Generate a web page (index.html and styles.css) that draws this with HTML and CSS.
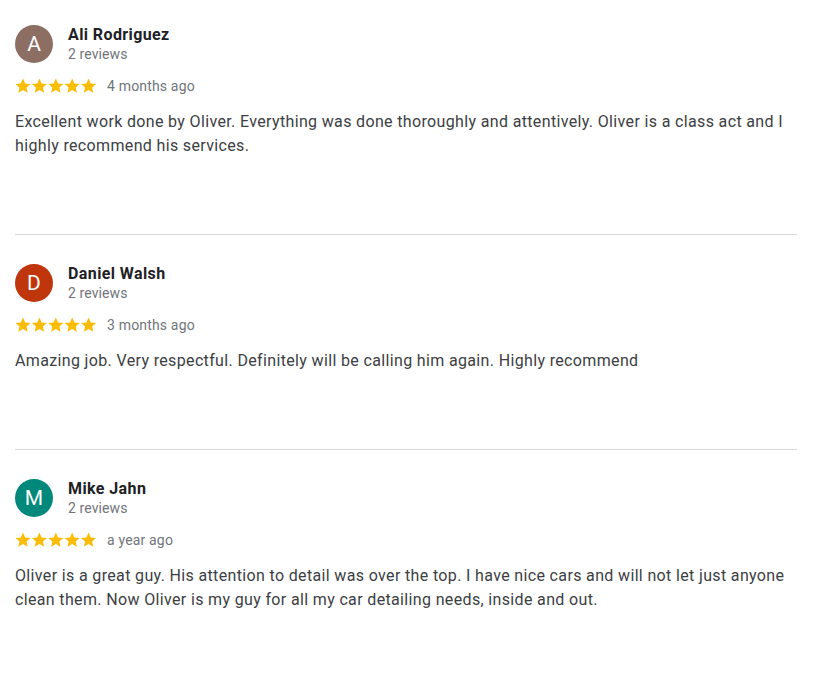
FILE: index.html
```html
<!DOCTYPE html>
<html>
<head>
<meta charset="utf-8">
<link rel="stylesheet" href="styles.css">
</head>
<body>
<div class="reviews">
  <div class="review">
    <div class="header">
      <div class="avatar avatar-brown">A</div>
      <div class="author">
        <div class="name">Ali Rodriguez</div>
        <div class="count">2 reviews</div>
      </div>
    </div>
    <div class="meta">
      <svg class="stars" width="82" height="16" viewBox="0 0 82 16"><defs><path id="s" d="M8 0.6l2.2 4.9 5.3 0.5-4 3.6 1.2 5.2L8 12.1l-4.7 2.7 1.2-5.2-4-3.6 5.3-0.5z"/></defs><use href="#s" x="0"/><use href="#s" x="16.4"/><use href="#s" x="32.8"/><use href="#s" x="49.2"/><use href="#s" x="65.6"/></svg>
      <span class="time">4 months ago</span>
    </div>
    <p class="text">Excellent work done by Oliver. Everything was done thoroughly and attentively. Oliver is a class act and I highly recommend his services.</p>
  </div>
  <div class="review">
    <div class="header">
      <div class="avatar avatar-red">D</div>
      <div class="author">
        <div class="name">Daniel Walsh</div>
        <div class="count">2 reviews</div>
      </div>
    </div>
    <div class="meta">
      <svg class="stars" width="82" height="16" viewBox="0 0 82 16"><use href="#s" x="0"/><use href="#s" x="16.4"/><use href="#s" x="32.8"/><use href="#s" x="49.2"/><use href="#s" x="65.6"/></svg>
      <span class="time">3 months ago</span>
    </div>
    <p class="text">Amazing job. Very respectful. Definitely will be calling him again. Highly recommend</p>
  </div>
  <div class="review">
    <div class="header">
      <div class="avatar avatar-teal">M</div>
      <div class="author">
        <div class="name">Mike Jahn</div>
        <div class="count">2 reviews</div>
      </div>
    </div>
    <div class="meta">
      <svg class="stars" width="82" height="16" viewBox="0 0 82 16"><use href="#s" x="0"/><use href="#s" x="16.4"/><use href="#s" x="32.8"/><use href="#s" x="49.2"/><use href="#s" x="65.6"/></svg>
      <span class="time">a year ago</span>
    </div>
    <p class="text">Oliver is a great guy. His attention to detail was over the top. I have nice cars and will not let just anyone clean them. Now Oliver is my guy for all my car detailing needs, inside and out.</p>
  </div>
</div>
</body>
</html>
```
FILE: styles.css
```css
html, body {
  margin: 0;
  padding: 0;
  background: #fff;
}
body {
  font-family: Roboto, "Liberation Sans", Arial, sans-serif;
}
.reviews {
  width: 782px;
  margin-left: 15px;
  padding-top: 25px;
}
.review {
  padding-bottom: 76px;
}
.review + .review {
  border-top: 1px solid #dadada;
  padding-top: 29px;
}
.header {
  display: flex;
  align-items: flex-start;
}
.avatar {
  width: 38px;
  height: 38px;
  border-radius: 50%;
  color: #fff;
  font-size: 21px;
  line-height: 38px;
  text-align: center;
  flex: none;
}
.avatar-brown { background: #8d6e63; }
.avatar-red { background: #bf360c; }
.avatar-teal { background: #00897b; }
.author {
  margin-left: 15px;
}
.name {
  font-size: 16px;
  font-weight: bold;
  line-height: 20px;
  letter-spacing: 0.4px;
  color: #202124;
}
.count {
  font-size: 14px;
  line-height: 18px;
  letter-spacing: 0.1px;
  color: #70757a;
}
.meta {
  display: flex;
  align-items: center;
  height: 20px;
  margin-top: 13px;
}
.stars {
  fill: #fbbc04;
  display: block;
}
.time {
  margin-left: 10px;
  font-size: 14px;
  line-height: 20px;
  letter-spacing: 0.17px;
  color: #70757a;
}
.text {
  margin: 14px 0 0;
  font-size: 16px;
  line-height: 24px;
  letter-spacing: 0.35px;
  color: #3c4043;
}
```
